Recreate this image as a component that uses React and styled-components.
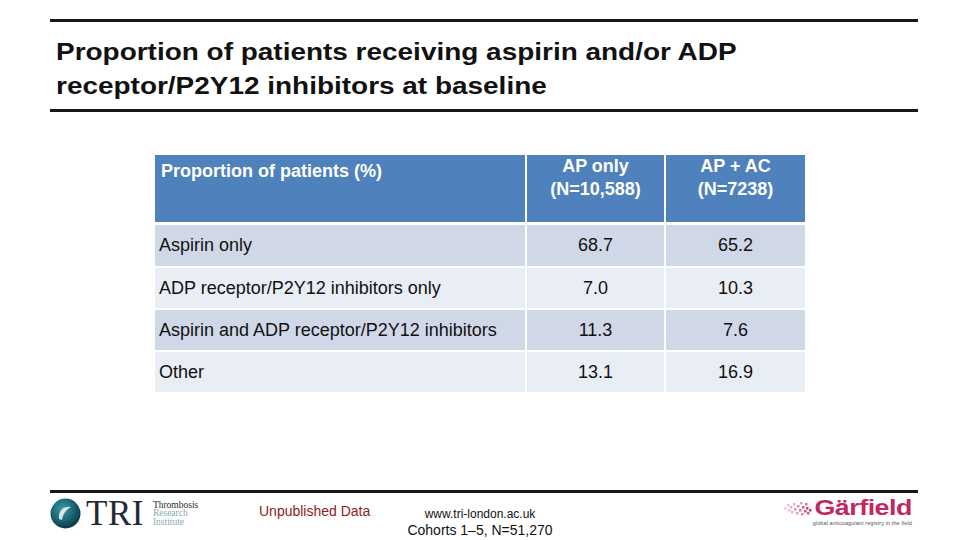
import { Fragment } from 'react';
import styled, { createGlobalStyle } from 'styled-components';

const GlobalStyle = createGlobalStyle`
    html, body {
        margin: 0;
        padding: 0;
        background: #ffffff;
    }
    body {
        font-family: "Liberation Sans", Arial, sans-serif;
    }
`;

const Slide = styled.div`
    width: 960px;
    height: 540px;
    overflow: hidden;
    display: flex;
    flex-direction: column;
    background: #ffffff;
`;

const TitleBlock = styled.header`
    margin: 19px 42px 0 50px;
`;

const Rule = styled.div`
    height: 3px;
    background: #16161f;
`;

const Title = styled.h1`
    margin: 0;
    padding: 13px 0 6px 6px;
    font-size: 23px;
    line-height: 34px;
    font-weight: 700;
    color: #111111;
`;

const TitleText = styled.span`
    display: inline-block;
    transform: scaleX(1.215);
    transform-origin: left center;
    white-space: nowrap;
`;

const Table = styled.div`
    margin: 43px 0 0 155px;
    width: 650px;
    display: grid;
    grid-template-columns: 370px 137px 139px;
    grid-template-rows: 68px 41px 40px 40px 40px;
    gap: 2px;
`;

const HeadCell = styled.div`
    align-self: start;
    height: 67px;
    background: #4f81bd;
    color: #ffffff;
    font-weight: 700;
    font-size: 18px;
    line-height: 23px;
    display: flex;
    flex-direction: column;
    align-items: ${p => (p.$label ? 'flex-start' : 'center')};
    padding: ${p => (p.$label ? '5px 6px 0' : '0')};
    box-sizing: border-box;
    text-align: center;
`;

const Cell = styled.div`
    background: ${p => (p.$shade ? '#d0d8e8' : '#e9edf4')};
    color: #111111;
    font-size: 18px;
    display: flex;
    align-items: center;
    justify-content: ${p => (p.$label ? 'flex-start' : 'center')};
    padding-left: ${p => (p.$label ? '4px' : '0')};
    box-sizing: border-box;
`;

const Footer = styled.footer`
    margin: auto 42px 0 50px;
    height: 50px;
`;

const FooterRow = styled.div`
    display: flex;
    align-items: flex-start;
    height: 47px;
`;

const TriLogo = styled.div`
    display: flex;
    align-items: center;
    padding-top: 5px;
    width: 209px;
`;

const TriMark = styled.span`
    font-family: "Liberation Serif", "Times New Roman", serif;
    font-size: 35px;
    line-height: 30px;
    color: #1f2a33;
    margin-left: 5px;
    letter-spacing: 0.5px;
`;

const TriName = styled.div`
    display: flex;
    flex-direction: column;
    margin-left: 9px;
    font-family: "Liberation Serif", "Times New Roman", serif;
    font-size: 9.5px;
    line-height: 8.5px;
`;

const TriLine = styled.span`
    color: ${p => (p.$dark ? '#2a2a2a' : '#86aab0')};
`;

const Unpublished = styled.div`
    width: 131px;
    padding-top: 10px;
    font-size: 14px;
    color: #8c1c1c;
`;

const Source = styled.div`
    width: 180px;
    padding-top: 14px;
    color: #111111;
    display: flex;
    flex-direction: column;
    align-items: center;
`;

const SourceUrl = styled.span`
    font-size: 12px;
    line-height: 14px;
`;

const SourceCohort = styled.span`
    font-size: 14px;
    line-height: 18px;
`;

const GarfieldLogo = styled.div`
    margin-left: auto;
    margin-right: 6px;
    padding-top: 5px;
    display: flex;
    flex-direction: column;
    align-items: flex-end;
`;

const GarfieldTop = styled.div`
    display: flex;
    align-items: center;
`;

const GarfieldWord = styled.span`
    display: inline-block;
    margin-left: 20px;
    font-family: "Liberation Sans", Arial, sans-serif;
    font-weight: 700;
    font-size: 22px;
    line-height: 20px;
    color: #c2285f;
    letter-spacing: -0.4px;
    transform: scaleX(1.22);
    transform-origin: right center;
`;

const GarfieldTag = styled.span`
    font-size: 5.5px;
    line-height: 8px;
    color: #555555;
    letter-spacing: 0.1px;
    margin-top: 1px;
`;

const rows = [
    { label: 'Aspirin only', ap: '68.7', ac: '65.2' },
    { label: 'ADP receptor/P2Y12 inhibitors only', ap: '7.0', ac: '10.3' },
    { label: 'Aspirin and ADP receptor/P2Y12 inhibitors', ap: '11.3', ac: '7.6' },
    { label: 'Other', ap: '13.1', ac: '16.9' },
];

const Sphere = () => (
    <svg width="31" height="31" viewBox="0 0 31 31">
        <defs>
            <radialGradient id="sph" cx="40%" cy="35%" r="70%">
                <stop offset="0%" stopColor="#3f97a8" />
                <stop offset="60%" stopColor="#176070" />
                <stop offset="100%" stopColor="#0b3340" />
            </radialGradient>
        </defs>
        <circle cx="15.5" cy="15.5" r="15" fill="url(#sph)" />
        <path d="M9 21 C8 13 13 8 21 9 C17 11 13 15 12 22 Z" fill="#e6f2f3" opacity="0.9" />
    </svg>
);

const pixelTrail = [
    [0, 9, 0.25], [3, 6, 0.3], [4, 11, 0.3], [6, 8, 0.4], [7, 13, 0.35], [9, 5, 0.35],
    [10, 10, 0.5], [12, 14, 0.45], [13, 7, 0.55], [15, 11, 0.65], [16, 4, 0.45], [17, 15, 0.55],
    [18, 8, 0.75], [20, 12, 0.8], [21, 5, 0.65], [22, 9, 0.9], [23, 14, 0.8], [25, 11, 0.95],
];

const Trail = () => (
    <svg width="28" height="20" viewBox="0 0 28 20">
        {pixelTrail.map(([x, y, o], i) => (
            <rect key={i} x={x} y={y} width="2.5" height="2.5" fill="#c2285f" opacity={o} />
        ))}
    </svg>
);

export default function App() {
    return (
        <>
            <GlobalStyle />
            <Slide>
                <TitleBlock>
                    <Rule />
                    <Title>
                        <TitleText>Proportion of patients receiving aspirin and/or ADP</TitleText>
                        <br />
                        <TitleText>receptor/P2Y12 inhibitors at baseline</TitleText>
                    </Title>
                    <Rule />
                </TitleBlock>

                <Table>
                    <HeadCell $label>Proportion of patients (%)</HeadCell>
                    <HeadCell>
                        <span>AP only</span>
                        <span>(N=10,588)</span>
                    </HeadCell>
                    <HeadCell>
                        <span>AP + AC</span>
                        <span>(N=7238)</span>
                    </HeadCell>
                    {rows.map((row, i) => (
                        <Fragment key={row.label}>
                            <Cell $label $shade={i % 2 === 0}>{row.label}</Cell>
                            <Cell $shade={i % 2 === 0}>{row.ap}</Cell>
                            <Cell $shade={i % 2 === 0}>{row.ac}</Cell>
                        </Fragment>
                    ))}
                </Table>

                <Footer>
                    <Rule />
                    <FooterRow>
                        <TriLogo>
                            <Sphere />
                            <TriMark>TRI</TriMark>
                            <TriName>
                                <TriLine $dark>Thrombosis</TriLine>
                                <TriLine>Research</TriLine>
                                <TriLine>Institute</TriLine>
                            </TriName>
                        </TriLogo>
                        <Unpublished>Unpublished Data</Unpublished>
                        <Source>
                            <SourceUrl>www.tri-london.ac.uk</SourceUrl>
                            <SourceCohort>Cohorts 1–5, N=51,270</SourceCohort>
                        </Source>
                        <GarfieldLogo>
                            <GarfieldTop>
                                <Trail />
                                <GarfieldWord>Gärfield</GarfieldWord>
                            </GarfieldTop>
                            <GarfieldTag>global anticoagulant registry in the field</GarfieldTag>
                        </GarfieldLogo>
                    </FooterRow>
                </Footer>
            </Slide>
        </>
    );
}
